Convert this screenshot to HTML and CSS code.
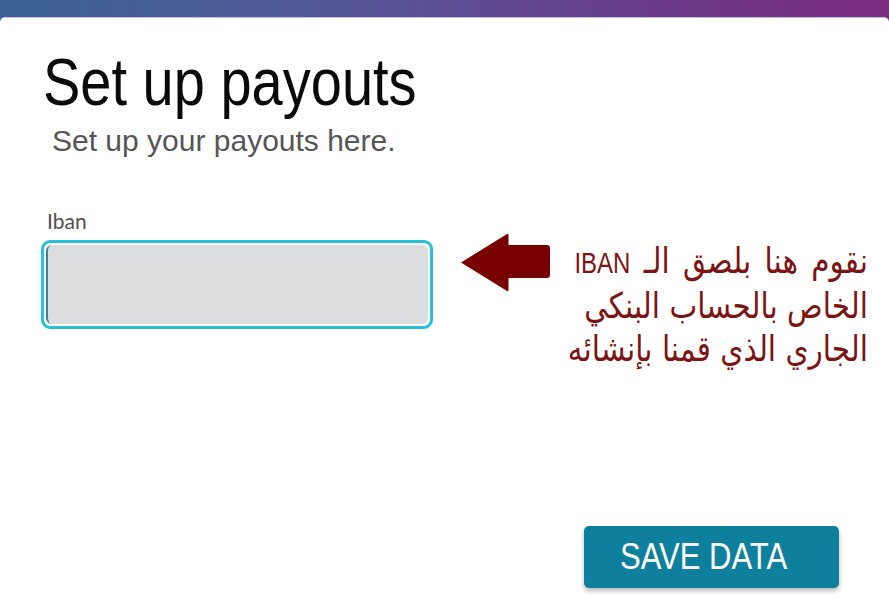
FILE: index.html
```html
<!DOCTYPE html>
<html lang="en">
<head>
<meta charset="utf-8">
<title>Set up payouts</title>
<link rel="stylesheet" href="styles.css">
</head>
<body>
<div class="page">
  <div class="card">
    <h1 class="title">Set up payouts</h1>
    <p class="subtitle">Set up your payouts here.</p>
    <div class="field-row">
      <div class="field">
        <label class="label" for="iban">Iban</label>
        <div class="input-wrap"><div class="input" id="iban"></div></div>
      </div>
      <div class="note">
        <svg class="arrow" width="90" height="60" viewBox="0 0 90 60" aria-hidden="true">
          <path d="M1 29.5 L47 1 Q48.5 0.5 48.5 2 L48.5 12 L87 12 Q90 12 90 15 L90 42 Q90 45 87 45 L48.5 45 L48.5 57 Q48.5 58.5 47 58 Z" fill="#790000"/>
        </svg>
        <p class="note-text" dir="rtl"><span class="first-line">نقوم هنا بلصق الـ <span class="latin">IBAN</span></span><br>الخاص بالحساب البنكي<br>الجاري الذي قمنا بإنشائه</p>
      </div>
    </div>
    <div class="actions">
      <button class="save" type="button"><span class="save-text">SAVE DATA</span></button>
    </div>
  </div>
</div>
</body>
</html>
```
FILE: styles.css
```css
html, body {
  margin: 0;
  padding: 0;
}
body {
  font-family: "Liberation Sans", Arial, "DejaVu Sans", sans-serif;
  background: #ffffff;
}
.page {
  width: 889px;
  height: 613px;
  overflow: hidden;
  background: linear-gradient(90deg, #3b6292 0%, #4e5b98 30%, #5f4a92 55%, #6c3a88 75%, #7a2a7f 100%);
}
.card {
  margin-top: 17px;
  height: 596px;
  background: #ffffff;
  border-radius: 5px 5px 0 0;
  border-top: 1px solid #c7bde0;
  box-sizing: border-box;
  display: flex;
  flex-direction: column;
}
.title {
  margin: 31px 0 0 0;
  padding-left: 43px;
  font-size: 56px;
  line-height: 56px;
  font-weight: normal;
  color: #0a0a0a;
  transform: scaleY(1.2);
  transform-origin: top left;
}
.subtitle {
  margin: 21px 0 0 0;
  padding-left: 52px;
  font-size: 30px;
  line-height: 30px;
  color: #555555;
}
.field-row {
  display: flex;
  align-items: flex-start;
  margin-top: 55px;
}
.field {
  margin-left: 41px;
  width: 392px;
  display: flex;
  flex-direction: column;
}
.label {
  font-family: Lato, "Liberation Sans", sans-serif;
  font-size: 21px;
  line-height: 20px;
  color: #505050;
  padding-left: 6px;
}
.input-wrap {
  margin-top: 9px;
  height: 89px;
  box-sizing: border-box;
  border: 3px solid #27c0d9;
  border-radius: 9px;
  padding: 2px;
  background: #ffffff;
}
.input {
  height: 100%;
  box-sizing: border-box;
  background: #dcdddf;
  border-radius: 6px;
  border-left: 2px solid #3d8097;
}
.note {
  display: flex;
  align-items: flex-start;
  margin-top: 22px;
  margin-left: 27px;
}
.arrow {
  display: block;
  flex: none;
}
.note-text {
  margin: 6px 0 0 0;
  width: 318px;
  font-family: "DejaVu Sans", "Liberation Sans", sans-serif;
  font-size: 29.5px;
  line-height: 36px;
  color: #7b1414;
  text-align: right;
  white-space: nowrap;
  transform: scaleY(1.2);
  transform-origin: top right;
}
.first-line {
  word-spacing: 4px;
}
.latin {
  font-family: "Liberation Sans", Arial, sans-serif;
  font-size: 24px;
}
.actions {
  display: flex;
  justify-content: flex-end;
  padding-right: 50px;
  margin-top: 177px;
}
.save {
  width: 255px;
  height: 62px;
  border: none;
  border-radius: 5px;
  background: #0e7f9c;
  box-shadow: 0 3px 5px rgba(0, 0, 0, 0.28);
  padding: 0 0 0 36px;
  display: flex;
  align-items: center;
  font-family: "Liberation Sans", Arial, sans-serif;
  font-size: 31px;
  color: #ffffff;
  cursor: pointer;
}
.save-text {
  display: block;
  line-height: 30px;
  transform: scaleY(1.2);
}
```
